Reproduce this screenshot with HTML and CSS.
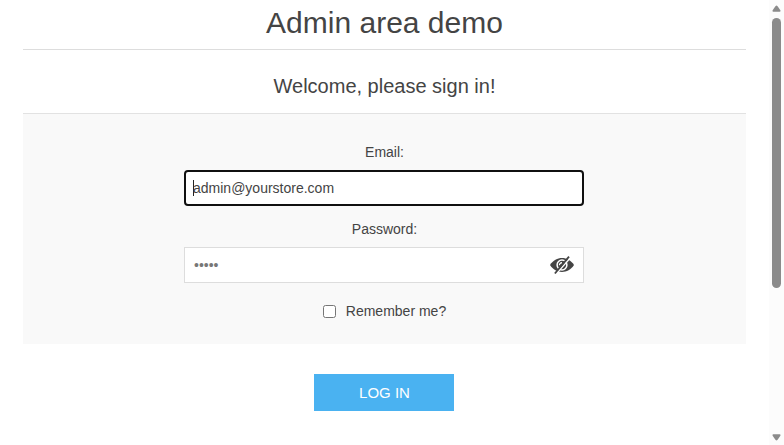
FILE: index.html
```html
<!DOCTYPE html>
<html lang="en">
<head>
<meta charset="utf-8">
<title>Admin area demo</title>
<link rel="stylesheet" href="styles.css">
</head>
<body>
<main class="page">
  <h1 class="page-title">Admin area demo</h1>
  <form class="login">
    <h2 class="login-title">Welcome, please sign in!</h2>
    <div class="fields">
      <label class="label">Email:</label>
      <div class="input focused"><span class="caret"></span>admin@yourstore.com</div>
      <label class="label label-password">Password:</label>
      <div class="input password"><span class="dots">•••••</span>
        <svg class="eye" viewBox="0 0 24 20" width="24" height="20">
          <path d="M0 10C6 .7 18 .7 24 10C18 19.3 6 19.3 0 10Z" fill="#444"/>
          <circle cx="12" cy="10" r="4.9" fill="none" stroke="#fff" stroke-width="1.5"/>
          <path d="M9.3 10.2Q9.5 7.9 12 7.6" fill="none" stroke="#fff" stroke-width="1.1"/>
          <path d="M6.3 18.8L20.2 2.9" stroke="#fff" stroke-width="1.5"/>
          <path d="M4.9 18.5L19 1.7" stroke="#444" stroke-width="1.8"/>
        </svg>
      </div>
      <div class="remember"><span class="checkbox"></span><span>Remember me?</span></div>
    </div>
    <button class="login-button" type="button">LOG IN</button>
  </form>
</main>
<aside class="scrollbar">
  <svg width="9" height="7" viewBox="0 0 10 7"><path d="M4 .7Q5-.4 6 .7L9.3 5.5Q9.8 7 8.5 7H1.5Q.2 7 .7 5.5Z" fill="#8b8b8b"/></svg>
  <div class="thumb"></div>
  <svg class="down" width="9" height="7" viewBox="0 0 10 7"><path d="M4 6.3Q5 7.4 6 6.3L9.3 1.5Q9.8 0 8.5 0H1.5Q.2 0 .7 1.5Z" fill="#8b8b8b"/></svg>
</aside>
</body>
</html>
```
FILE: styles.css
```css
* { box-sizing: border-box; }
body {
  margin: 0;
  height: 445px;
  overflow: hidden;
  display: flex;
  background: #fff;
  color: #444;
  font: 14px "Liberation Sans", Arial, sans-serif;
}
.page { flex: 1; padding: 0 23px; text-align: center; }
.page-title {
  margin: 0;
  height: 50px;
  padding-top: 6px;
  border-bottom: 1px solid #ddd;
  font-size: 30px;
  line-height: 34px;
  font-weight: normal;
}
.login { display: flex; flex-direction: column; align-items: center; }
.login-title {
  margin: 0;
  height: 63px;
  padding-top: 25px;
  font-size: 20px;
  line-height: 23px;
  font-weight: normal;
}
.fields {
  width: 100%;
  height: 231px;
  padding-top: 30px;
  border-top: 1px solid #e2e2e2;
  background: #f9f9f9;
  display: flex;
  flex-direction: column;
  align-items: center;
}
.label { height: 26px; line-height: 16px; }
.label-password { margin-top: 15px; }
.input {
  width: 400px;
  height: 36px;
  margin-right: 1px;
  padding: 0 9px;
  border: 1px solid #ddd;
  background: #fff;
  display: flex;
  align-items: center;
}
.focused { padding: 0 7px; border: 2px solid #101010; border-radius: 4px; }
.caret { width: 1px; height: 16px; margin-right: -1px; background: #222; }
.password { justify-content: space-between; color: #777; }
.eye { flex: none; }
.remember { margin-top: 20px; display: flex; align-items: center; gap: 10px; line-height: 16px; }
.checkbox {
  width: 13px;
  height: 13px;
  border: 1px solid #767676;
  border-radius: 2.5px;
  background: #fff;
}
.login-button {
  width: 140px;
  height: 37px;
  margin: 30px 1px 0 0;
  padding: 0 0 0 1px;
  border: 0;
  background: #4ab2f1;
  color: #fff;
  font: 15px "Liberation Sans", Arial, sans-serif;
}
.scrollbar {
  width: 15px;
  height: 445px;
  padding: 5px 0 4px;
  background: #fcfcfc;
  display: flex;
  flex-direction: column;
  align-items: center;
}
.thumb { width: 9px; height: 270px; margin-top: 6px; border-radius: 5px; background: #8b8b8b; }
.down { margin-top: auto; }
```
